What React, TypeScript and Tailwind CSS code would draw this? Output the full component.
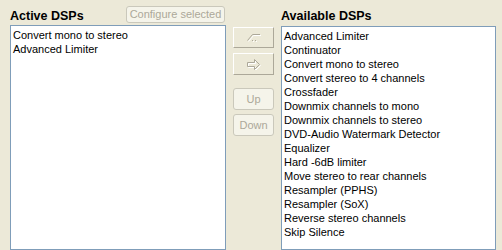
import React from "react";

const active = ["Convert mono to stereo", "Advanced Limiter"];
const available = [
  "Advanced Limiter",
  "Continuator",
  "Convert mono to stereo",
  "Convert stereo to 4 channels",
  "Crossfader",
  "Downmix channels to mono",
  "Downmix channels to stereo",
  "DVD-Audio Watermark Detector",
  "Equalizer",
  "Hard -6dB limiter",
  "Move stereo to rear channels",
  "Resampler (PPHS)",
  "Resampler (SoX)",
  "Reverse stereo channels",
  "Skip Silence",
];

function ListBox({ items, width }: { items: string[]; width: string }) {
  return (
    <div className={`${width} h-[240px] border border-[#7F9DB9] bg-white pl-[2px] pt-[2px]`}>
      {items.map((t) => (
        <div key={t} className="h-[14px] leading-[14px] text-[11px] text-black whitespace-nowrap">
          {t}
        </div>
      ))}
    </div>
  );
}

function ClassicBtn({ children, h }: { children: React.ReactNode; h: string }) {
  return (
    <div
      className={`w-[41px] ${h} flex items-center justify-center bg-[#ECE9D8] border border-t-white border-l-white border-b-[#ACA899] border-r-[#ACA899]`}
    >
      {children}
    </div>
  );
}

function DisabledBtn({ label, cls }: { label: string; cls: string }) {
  return (
    <div
      className={`${cls} flex items-center justify-center rounded-[3px] border border-[#CAC8BB] bg-[#F5F4EA] text-[11px] text-[#ACA899]`}
    >
      {label}
    </div>
  );
}

export default function App() {
  return (
    <div
      className="w-[502px] h-[250px] overflow-hidden bg-[#ECE9D8] flex pl-[10px]"
      style={{ fontFamily: '"Liberation Sans", Arial, sans-serif' }}
    >
      <div className="flex flex-col w-[216px]">
        <div className="h-[27px] flex items-start">
          <div className="pt-[9px] text-[12.5px] font-bold text-black leading-[14px]">Active DSPs</div>
          <DisabledBtn label="Configure selected" cls="ml-auto mt-[6px] mr-[1px] w-[99px] h-[17px]" />
        </div>
        <ListBox items={active} width="w-[216px]" />
      </div>
      <div className="flex flex-col ml-[7px] pt-[27px] w-[41px]">
        <ClassicBtn h="h-[21px]">
          <svg width="16" height="10" viewBox="0 0 16 10">
            <path d="M1.5 7.5 L6.5 1.5 L14 1.5" fill="none" stroke="#ACA899" strokeWidth="1" />
            <path d="M2.5 8.5 L7.5 2.5 L15 2.5" fill="none" stroke="#FFFFFF" strokeWidth="1" />
            <rect x="6" y="7" width="1" height="1" fill="#ACA899" />
            <rect x="9" y="7" width="1" height="1" fill="#ACA899" />
            <rect x="7" y="8" width="1" height="1" fill="#FFFFFF" />
            <rect x="10" y="8" width="1" height="1" fill="#FFFFFF" />
          </svg>
        </ClassicBtn>
        <div className="h-[5px]" />
        <ClassicBtn h="h-[22px]">
          <svg width="17" height="11" viewBox="0 0 17 11">
            <path d="M2.5 3.5 L9.5 3.5 L9.5 0.5 L14.5 5.5 L9.5 10.5 L9.5 7.5 L2.5 7.5 Z" fill="none" stroke="#FFFFFF" strokeWidth="1" transform="translate(1,1)" />
            <path d="M2.5 3.5 L9.5 3.5 L9.5 0.5 L14.5 5.5 L9.5 10.5 L9.5 7.5 L2.5 7.5 Z" fill="none" stroke="#ACA899" strokeWidth="1" />
          </svg>
        </ClassicBtn>
        <div className="h-[13px]" />
        <DisabledBtn label="Up" cls="w-[41px] h-[22px]" />
        <div className="h-[4px]" />
        <DisabledBtn label="Down" cls="w-[41px] h-[22px]" />
      </div>
      <div className="flex flex-col ml-[7px] w-[215px]">
        <div className="h-[27px] pt-[9px] text-[12.5px] font-bold text-black leading-[14px]">Available DSPs</div>
        <ListBox items={available} width="w-[215px]" />
      </div>
    </div>
  );
}
